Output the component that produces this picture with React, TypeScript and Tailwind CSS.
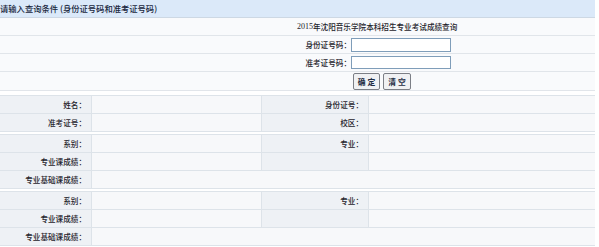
const cjk = "font-['Noto_Sans_CJK_SC',_sans-serif]";

const labelCell =
  "bg-[#eef1f5] border-r border-[#dde3e9] text-right pr-[5px] flex items-center justify-end";
const valueCell = "bg-[#f7f8fa] border-r border-[#dde3e9]";

function Row({ children }: { children: React.ReactNode }) {
  return (
    <div className="grid grid-cols-[92px_170px_107px_1fr] h-[18px] border-b border-[#dde3e9]">
      {children}
    </div>
  );
}

function FullRow({ label }: { label: string }) {
  return (
    <div className="grid grid-cols-[92px_1fr] h-[18px] border-b border-[#dde3e9]">
      <div className={labelCell}>{label}</div>
      <div className="bg-[#f7f8fa]" />
    </div>
  );
}

function ScoreTable() {
  return (
    <div className="border-t border-[#dde3e9] mt-[2px]">
      <Row>
        <div className={labelCell}>系别：</div>
        <div className={valueCell} />
        <div className={labelCell}>专业：</div>
        <div className="bg-[#f7f8fa]" />
      </Row>
      <Row>
        <div className={labelCell}>专业课成绩：</div>
        <div className={valueCell} />
        <div className={labelCell} />
        <div className="bg-[#f7f8fa]" />
      </Row>
      <FullRow label="专业基础课成绩：" />
    </div>
  );
}

export default function App() {
  return (
    <div className={`w-[595px] bg-white text-[#1e232b] text-[7.6px] leading-none font-medium ${cjk}`}>
      {/* Query form */}
      <div className="h-[18px] bg-[#dbe9f9] border-b border-[#cdd8e4] flex items-center text-[8.3px] text-[#18263d] whitespace-nowrap">
        请输入查询条件 (身份证号码和准考证号码)
      </div>
      <div className="h-[18px] bg-[#f9fafc] border-b border-[#e1e5ea] flex items-center pl-[297px] whitespace-nowrap">
        <span className="font-['Liberation_Serif',_serif] text-[8px]">2015</span>
        年沈阳音乐学院本科招生专业考试成绩查询
      </div>
      <div className="h-[18px] bg-[#f9fafc] border-b border-[#e1e5ea] grid grid-cols-[351px_1fr] items-center">
        <div className="text-right">身份证号码：</div>
        <div>
          <input className="block w-[100px] h-[14px] bg-white border border-[#7f9db9] outline-none" />
        </div>
      </div>
      <div className="h-[18px] bg-[#f9fafc] border-b border-[#e1e5ea] grid grid-cols-[351px_1fr] items-center">
        <div className="text-right">准考证号码：</div>
        <div>
          <input className="block w-[100px] h-[13px] bg-white border border-[#7f9db9] outline-none" />
        </div>
      </div>
      <div className="h-[19px] bg-[#f9fafc] border-b border-[#e1e5ea] flex items-end gap-[3px] pl-[353px]">
        <button className="w-[27px] h-[17px] bg-[#f0f1f3] border border-[#7c7f86] rounded-[2px] text-[7.8px] text-[#1f2d44] font-bold">
          确 定
        </button>
        <button className="w-[28px] h-[17px] bg-[#f0f1f3] border border-[#7c7f86] rounded-[2px] text-[7.8px] text-[#1f2d44] font-bold">
          清 空
        </button>
      </div>

      {/* Result tables */}
      <div className="border-t border-[#dde3e9] mt-[4px]">
        <Row>
          <div className={labelCell}>姓名：</div>
          <div className={valueCell} />
          <div className={labelCell}>身份证号：</div>
          <div className="bg-[#f7f8fa]" />
        </Row>
        <Row>
          <div className={labelCell}>准考证号：</div>
          <div className={valueCell} />
          <div className={labelCell}>校区：</div>
          <div className="bg-[#f7f8fa]" />
        </Row>
      </div>
      <ScoreTable />
      <ScoreTable />
    </div>
  );
}
